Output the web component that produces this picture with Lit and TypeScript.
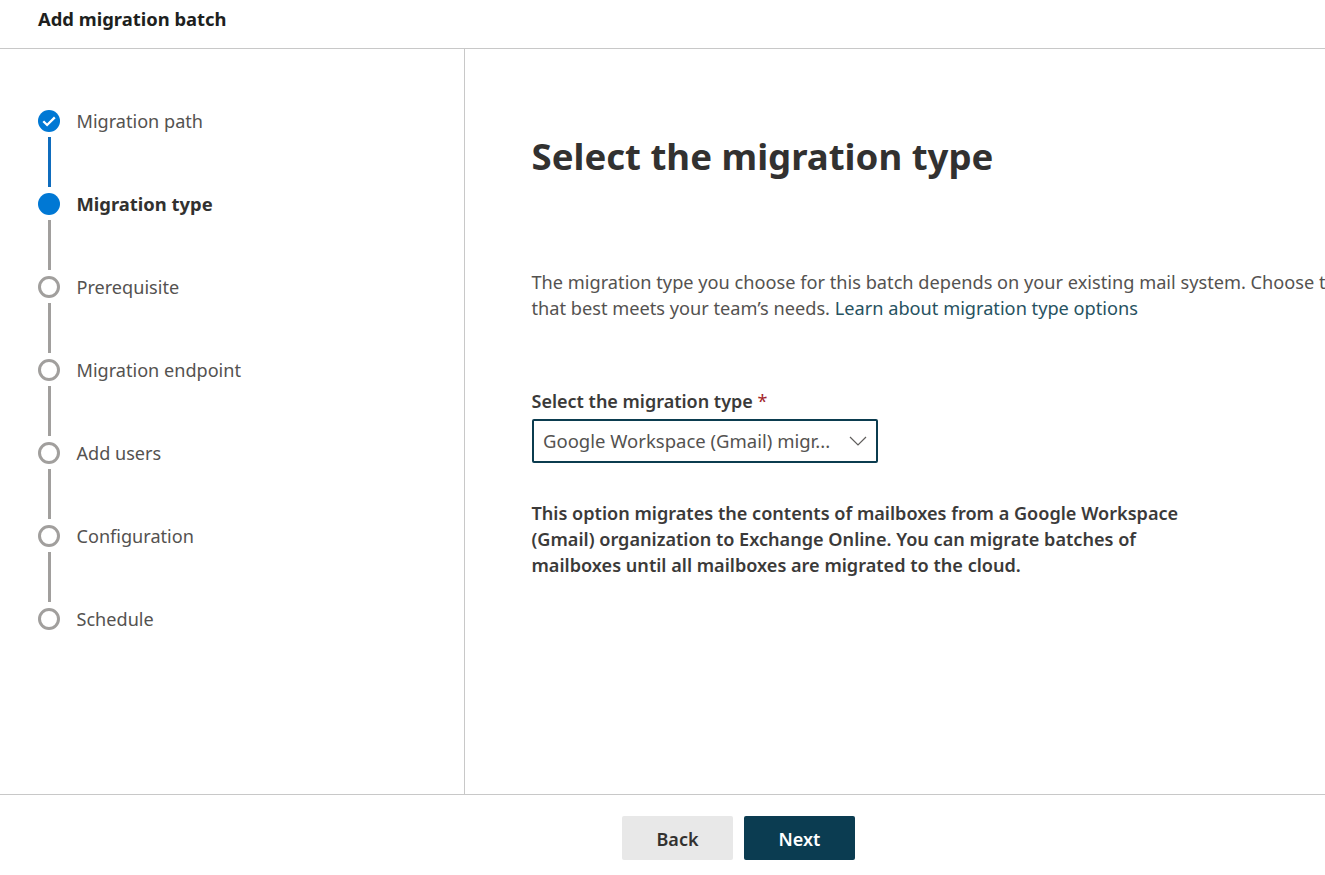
import { LitElement, html, css, svg } from "lit";
import { customElement } from "lit/decorators.js";
import { classMap } from "lit/directives/class-map.js";

const steps = [
    { label: "Migration path", state: "done" },
    { label: "Migration type", state: "current" },
    { label: "Prerequisite", state: "todo" },
    { label: "Migration endpoint", state: "todo" },
    { label: "Add users", state: "todo" },
    { label: "Configuration", state: "todo" },
    { label: "Schedule", state: "todo" },
];

const check = svg`<path d="M5.3 11.3l3.8 3.7 7.7-7.6" fill="none" stroke="#fff" stroke-width="2.3"/>`;

@customElement("app-root")
export class AppRoot extends LitElement
{
    static styles = css`
        :host {
            display: flex;
            flex-direction: column;
            width: 1325px;
            height: 875px;
            overflow: hidden;
            background: #fff;
            color: #323130;
            font-family: "Noto Sans", "Open Sans", sans-serif;
        }
        .top {
            flex: none;
            height: 37px;
            display: flex;
            align-items: center;
            padding: 0 38px 11px;
            border-bottom: 1px solid #c8c8c8;
            font-size: 18.4px;
            font-weight: 700;
            color: #201f1e;
        }
        .middle {
            flex: none;
            height: 745px;
            display: flex;
            border-bottom: 1px solid #c8c8c8;
        }
        .nav {
            width: 465px;
            flex: none;
            box-sizing: border-box;
            border-right: 1px solid #c8c8c8;
            padding: 60px 0 0 38px;
        }
        .step {
            display: flex;
            gap: 16.5px;
            height: 83px;
            font-size: 18.1px;
            line-height: 24px;
            color: #545250;
        }
        .step:last-child { height: 24px; }
        .step.current { font-weight: 700; font-size: 18.4px; color: #323130; }
        .track {
            width: 22px;
            flex: none;
            display: flex;
            flex-direction: column;
            align-items: center;
        }
        .dot {
            width: 22px;
            height: 22px;
            flex: none;
            box-sizing: border-box;
            border-radius: 50%;
            border: 3px solid #a19f9d;
            margin-top: 1px;
        }
        .done .dot, .current .dot {
            border: none;
            background: #0078d4;
        }
        .dot svg { display: block; width: 22px; height: 22px; }
        .line {
            width: 3px;
            height: 50px;
            margin: 5px 0 0 1px;
            background: #a19f9d;
        }
        .done .line { background: #0f6cbd; }
        .content {
            flex: 1;
            min-width: 0;
            overflow: hidden;
            padding: 82px 0 0 66.5px;
        }
        h1 {
            margin: 0;
            font-size: 36.6px;
            line-height: 50px;
            font-weight: 700;
            color: #323130;
            white-space: nowrap;
        }
        .intro {
            margin: 88px 0 0;
            font-size: 18.2px;
            line-height: 26px;
            color: #545250;
            white-space: nowrap;
        }
        a { color: #27525f; text-decoration: none; }
        label {
            display: block;
            margin-top: 67px;
            font-size: 18px;
            line-height: 26px;
            font-weight: 600;
            color: #3b3a39;
        }
        label span { color: #a4262c; font-weight: 400; }
        .select {
            width: 346px;
            height: 44px;
            margin-top: 5px;
            box-sizing: border-box;
            display: flex;
            align-items: center;
            justify-content: space-between;
            padding: 0 9px 2px 9.5px;
            border: 2px solid #0b3c4f;
            border-radius: 2px;
            font-size: 18.5px;
            color: #545250;
            white-space: nowrap;
        }
        .select svg { display: block; width: 18px; height: 18px; flex: none; margin-top: 2px; }
        .note {
            margin: 37px 0 0;
            width: 680px;
            font-size: 18.1px;
            line-height: 26px;
            font-weight: 600;
            color: #3b3a39;
        }
        .footer {
            flex: 1;
            display: flex;
            gap: 11px;
            padding: 21px 0 0 622px;
        }
        button {
            width: 111px;
            height: 44px;
            padding: 2px 0 0;
            border: none;
            border-radius: 2px;
            font: 600 18px "Noto Sans", "Open Sans", sans-serif;
            background: #e8e8e8;
            color: #323130;
        }
        button.primary { background: #0b3c51; color: #fff; }
    `;

    render()
    {
        return html`
            <div class="top">Add migration batch</div>
            <div class="middle">
                <div class="nav">
                    ${steps.map((s, i) => html`
                        <div class=${classMap({ step: true, [s.state]: true })}>
                            <div class="track">
                                <div class="dot">
                                    ${s.state === "done" ? html`<svg viewBox="0 0 22 22">${check}</svg>` : ""}
                                </div>
                                ${i < steps.length - 1 ? html`<div class="line"></div>` : ""}
                            </div>
                            <div>${s.label}</div>
                        </div>
                    `)}
                </div>
                <div class="content">
                    <h1>Select the migration type</h1>
                    <p class="intro">
                        The migration type you choose for this batch depends on your existing mail system. Choose the option<br>
                        that best meets your team’s needs. <a href="#">Learn about migration type options</a>
                    </p>
                    <label>Select the migration type <span>*</span></label>
                    <div class="select">
                        <div>Google Workspace (Gmail) migr...</div>
                        <svg viewBox="0 0 18 18"><path d="M1 5l8 8 8-8" fill="none" stroke="#605e5c" stroke-width="1.2"/></svg>
                    </div>
                    <p class="note">
                        This option migrates the contents of mailboxes from a Google Workspace (Gmail) organization to Exchange Online. You can migrate batches of mailboxes until all mailboxes are migrated to the cloud.
                    </p>
                </div>
            </div>
            <div class="footer">
                <button>Back</button>
                <button class="primary">Next</button>
            </div>
        `;
    }
}
